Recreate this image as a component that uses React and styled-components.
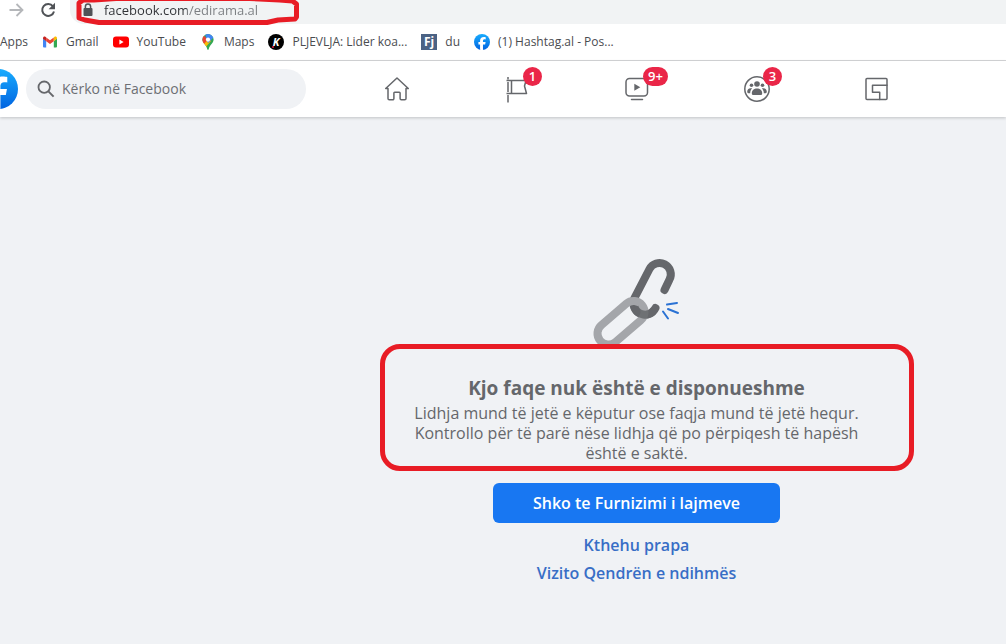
import { useId, useState } from 'react'
import styled, { createGlobalStyle } from 'styled-components'

const GlobalStyle = createGlobalStyle`
  * { box-sizing: border-box; }

  body {
    margin: 0;
    background-color: #f0f2f5;
    color: #65676b;
    font-family: 'Open Sans', 'Noto Sans', sans-serif;
  }

  button, input { font: inherit; }
  a { text-decoration: none; }
  svg { display: block; flex-shrink: 0; }
`

// ─── Browser chrome ───────────────────────────────────────────────────────────

const Page = styled.div`
  display: flex;
  flex-direction: column;
  min-height: 100vh;
  overflow: hidden;
`

const Toolbar = styled.div`
  display: flex;
  align-items: flex-start;
  height: 24px;
  background-color: #fff;
`

const ToolButton = styled.button`
  display: flex;
  align-items: center;
  justify-content: center;
  width: 32px;
  height: 20px;
  padding: 0;
  border: 0;
  background: none;
  color: ${p => (p.disabled ? '#b5b7ba' : '#505357')};
`

const AddressBar = styled.label`
  position: relative;
  flex: 1;
  display: flex;
  align-items: center;
  gap: 11px;
  height: 24px;
  margin-left: 6px;
  padding: 0 0 4px 13px;
  border-bottom-left-radius: 14px;
  background-color: #f1f3f4;
`

// host part is darker than the path
const AddressInput = styled.input`
  flex: 1;
  min-width: 0;
  height: 20px;
  padding: 0;
  border: 0;
  outline: none;
  font-size: 13px;
  line-height: 20px;
  color: transparent;
  background-image: linear-gradient(to right, #303236 83px, #7a7d81 83px);
  background-clip: text;
`

const AddressMark = styled.svg`
  position: absolute;
  top: 0;
  left: 6px;
  pointer-events: none;
`

const Bookmarks = styled.nav`
  display: flex;
  align-items: center;
  gap: 14px;
  height: 37px;
  border-bottom: 1px solid #d5d6d8;
  background-color: #fff;
`

const Bookmark = styled.a`
  display: flex;
  align-items: center;
  gap: 8px;
  color: #4a4c50;
  font-size: 12px;
  line-height: 16px;
  white-space: nowrap;
`

// ─── Site header ──────────────────────────────────────────────────────────────

const Header = styled.header`
  display: flex;
  align-items: center;
  height: 56px;
  background-color: #fff;
  box-shadow: 0 1px 3px rgba(0, 0, 0, 0.2);
`

const HomeLink = styled.a`
  margin-left: -22px;
`

const Search = styled.label`
  display: flex;
  align-items: center;
  gap: 7px;
  width: 280px;
  height: 40px;
  margin-left: 8px;
  padding: 0 11px;
  border-radius: 20px;
  background-color: #f0f2f5;
`

const SearchInput = styled.input`
  flex: 1;
  min-width: 0;
  padding: 0;
  border: 0;
  outline: none;
  background: none;
  font-size: 14px;
  line-height: 20px;
  color: #65676b;

  &::placeholder { color: #6d6f74; opacity: 1; }
`

const Tabs = styled.nav`
  display: flex;
  margin-left: 31px;
`

const Tab = styled.a`
  display: flex;
  align-items: center;
  justify-content: center;
  width: 120px;
  height: 56px;
  color: #65676b;
`

const TabIcon = styled.span`
  position: relative;
`

const Badge = styled.span`
  position: absolute;
  top: -8px;
  left: 20px;
  min-width: 19px;
  height: 19px;
  padding: 0 5px;
  border-radius: 10px;
  background-color: #ea2648;
  color: #fff;
  font-size: 13px;
  font-weight: 600;
  line-height: 19px;
  text-align: center;
`

// ─── Missing page notice ──────────────────────────────────────────────────────

const Main = styled.main`
  display: flex;
  flex-direction: column;
  align-items: center;
  padding: 129px 0 48px 267px;
`

const Notice = styled.section`
  position: relative;
  display: flex;
  flex-direction: column;
  align-items: center;
  margin-top: 18px;
  text-align: center;
`

const NoticeFrame = styled.div`
  position: absolute;
  top: -32px;
  right: -43px;
  bottom: -8px;
  left: -23px;
  border: 5px solid #e81c25;
  border-radius: 20px;
  pointer-events: none;
`

const Title = styled.h1`
  margin: 0 0 3px;
  font-size: 19px;
  font-weight: 700;
  line-height: 24px;
`

const Text = styled.p`
  width: 468px;
  margin: 0;
  font-size: 16px;
  line-height: 20px;
`

const PrimaryButton = styled.button`
  width: 287px;
  height: 40px;
  margin: 20px 0 8px;
  border: 0;
  border-radius: 6px;
  background-color: #1877f2;
  color: #fff;
  font-size: 16px;
  font-weight: 600;
`

const TextLink = styled.a`
  color: #386ec6;
  font-size: 16px;
  font-weight: 600;
  line-height: 28px;
`

// ─── Icons ────────────────────────────────────────────────────────────────────

function FacebookLogo({ size }) {
  const id = useId()
  return (
    <svg width={size} height={size} viewBox="0 0 36 36">
      <defs>
        <linearGradient id={id} x1="0" y1="0" x2="0" y2="1">
          <stop offset="0" stopColor="#18acfe" />
          <stop offset="1" stopColor="#0163e0" />
        </linearGradient>
      </defs>
      <circle cx="18" cy="18" r="18" fill={`url(#${id})`} />
      <path fill="#fff" d="M13.651 35.471v-11.97H9.936V18h3.715v-2.37c0-6.127 2.772-8.964 8.784-8.964 1.138 0 3.103.223 3.91.446v4.983c-.425-.043-1.167-.065-2.081-.065-2.952 0-4.09 1.116-4.09 4.025V18h5.883l-1.008 5.5h-4.867v12.37a18.183 18.183 0 0 1-6.53-.399Z" />
    </svg>
  )
}

const ForwardIcon = () => (
  <svg width="16" height="16" viewBox="0 0 16 16" fill="none" stroke="currentColor" strokeWidth="1.8">
    <path d="M1.5 8h12M8.5 2l6 6-6 6" />
  </svg>
)

const ReloadIcon = () => (
  <svg width="16" height="16" viewBox="0 0 16 16" fill="none" stroke="currentColor" strokeWidth="2">
    <path d="M13 4.3A6 6 0 1 0 14 9.5" />
    <path d="M15 .8v6.4H8.6z" fill="currentColor" stroke="none" />
  </svg>
)

const LockIcon = () => (
  <svg width="10" height="14" viewBox="0 0 10 14">
    <path fill="none" stroke="#505357" strokeWidth="1.5" d="M2.4 6V3.6a2.6 2.6 0 0 1 5.2 0V6" />
    <rect x=".5" y="5" width="9" height="8" rx="1" fill="#505357" />
  </svg>
)

const GmailIcon = () => (
  <svg width="16" height="16" viewBox="0 0 16 16">
    <path fill="#4285f4" d="M1 4.5l3.2 2.4v6.6H2a1 1 0 0 1-1-1z" />
    <path fill="#34a853" d="M11.8 6.9L15 4.5v8a1 1 0 0 1-1 1h-2.2z" />
    <path fill="#ea4335" d="M4.2 3.4L8 6.3l3.8-2.9v3.8L8 10.1 4.2 7.2z" />
    <path fill="#c5221f" d="M1 4.2c0-1.6 1.6-2 2.6-1.3l.6.5v3.8L1 4.8z" />
    <path fill="#fbbc04" d="M15 4.2c0-1.6-1.6-2-2.6-1.3l-.6.5v3.8L15 4.8z" />
  </svg>
)

const YouTubeIcon = () => (
  <svg width="16" height="16" viewBox="0 0 16 16">
    <rect y="2.4" width="16" height="11.2" rx="3" fill="#f00" />
    <path fill="#fff" d="M6.4 5.6l4.2 2.4-4.2 2.4z" />
  </svg>
)

const MapsIcon = () => {
  const id = useId()
  return (
    <svg width="16" height="16" viewBox="0 0 16 16">
      <clipPath id={id}>
        <path d="M8 0a5.6 5.6 0 0 1 5.6 5.6c0 4-3.8 5-4.9 9.6q-.7 1.4-1.4 0C6.2 10.6 2.4 9.6 2.4 5.6A5.6 5.6 0 0 1 8 0z" />
      </clipPath>
      <g clipPath={`url(#${id})`}>
        <path fill="#34a853" d="M0 0h16v16H0z" />
        <path fill="#fbbc04" d="M0 12L8 3l3 4-7 8z" />
        <path fill="#ea4335" d="M2 0L8 5.6 4 10 0 7z" />
        <path fill="#4285f4" d="M5 0h9v3L8 9 6.5 5z" />
      </g>
      <circle cx="8" cy="5.6" r="2.1" fill="#fff" />
    </svg>
  )
}

const IconLetter = styled.text`
  fill: #fff;
  font-family: 'Open Sans', sans-serif;
  font-weight: 700;
  text-anchor: middle;
`

const KIcon = () => (
  <svg width="16" height="16" viewBox="0 0 16 16">
    <circle cx="8" cy="8" r="8" fill="#000" />
    <IconLetter x="8" y="12" fontSize="11" fontStyle="italic">K</IconLetter>
    <circle cx="5" cy="13" r="1" fill="#e41e3f" />
  </svg>
)

const FjIcon = () => (
  <svg width="16" height="16" viewBox="0 0 16 16">
    <rect width="16" height="16" fill="#4b6284" />
    <IconLetter x="8" y="12" fontSize="12">Fj</IconLetter>
  </svg>
)

const SearchIcon = () => (
  <svg width="18" height="18" viewBox="0 0 18 18" fill="none" stroke="#65676b" strokeWidth="1.8">
    <circle cx="7.2" cy="7.2" r="5.7" />
    <path d="M11.4 11.4l5.2 5.2" strokeWidth="2" />
  </svg>
)

const tabSvg = {
  width: 28,
  height: 28,
  viewBox: '0 0 28 28',
  fill: 'none',
  stroke: 'currentColor',
  strokeWidth: 1.5,
  strokeLinejoin: 'round',
  strokeLinecap: 'round',
}

const HomeIcon = () => (
  <svg {...tabSvg}>
    <path d="M5 13.5H2.7L14 3l11.3 10.5H23v10a1.3 1.3 0 0 1-1.3 1.3h-3.4a1.2 1.2 0 0 1-1.2-1.2V18a.8.8 0 0 0-.8-.8h-4.6a.8.8 0 0 0-.8.8v5.6a1.2 1.2 0 0 1-1.2 1.2H6.3A1.3 1.3 0 0 1 5 23.5z" />
  </svg>
)

const FlagIcon = () => (
  <svg {...tabSvg} strokeLinecap="butt">
    <path d="M5 2v2.5M5 7v10M5 20v7.5" />
    <path d="M3.5 5.5H23l-1.5 5.5 2 7.5H3.5M8.5 5.5v13" />
  </svg>
)

const WatchIcon = () => (
  <svg {...tabSvg}>
    <rect x="3" y="3.5" width="21.5" height="17.5" rx="3.5" />
    <path d="M8.5 24.5h11" />
    <path d="M11.3 8.8v7l6-3.5z" fill="currentColor" stroke="none" />
  </svg>
)

const GroupsIcon = () => (
  <svg {...tabSvg}>
    <circle cx="14" cy="14" r="12.2" />
    <g fill="currentColor" stroke="none">
      <circle cx="14" cy="9" r="2.8" />
      <circle cx="8.5" cy="10.2" r="1.8" />
      <circle cx="19.5" cy="10.2" r="1.8" />
      <path d="M8.8 18.5c0-3.5 2.2-5 5.2-5s5.2 1.5 5.2 5c0 1.2-.8 1.5-1.7 1.5h-7c-.9 0-1.7-.3-1.7-1.5z" />
      <path d="M7.7 13.3c-2.3 0-3.5 1.7-3.5 3.4 0 1.2.9 1.5 2 1.5h1c0-2 .7-3.6 2-4.6-.4-.2-.9-.3-1.5-.3zM20.3 13.3c2.3 0 3.5 1.7 3.5 3.4 0 1.2-.9 1.5-2 1.5h-1c0-2-.7-3.6-2-4.6.4-.2.9-.3 1.5-.3z" />
    </g>
  </svg>
)

const GamingIcon = () => (
  <svg {...tabSvg}>
    <rect x="3" y="3.5" width="21" height="21" rx="1" />
    <path d="M24 10.3H9.5v7h7.2v7.2" />
  </svg>
)

const BrokenLink = () => (
  <svg width="112" height="112" viewBox="581 246 112 112" fill="none" strokeWidth="8" strokeLinecap="round">
    <path stroke="#65676b" d="M664.500 290l5-10.500a11 11 0 0 0-20-10.500L634.500 298a11 11 0 0 0 21 10" />
    <path stroke="#a4a6aa" d="M626.500 303.500l-25 21.500a11 11 0 0 0 14 17l25-21.500a11 11 0 0 0-14-17z" />
    <path stroke="#65676b" strokeOpacity=".85" strokeLinecap="butt" d="M634.500 307a11 11 0 0 0 19.500 3" />
    <g stroke="#2a72d4" strokeWidth="2">
      <path d="M667 304.500l10-1.500M668 309l10 4M663 311.500l5 7" />
    </g>
  </svg>
)

// ─── Page ─────────────────────────────────────────────────────────────────────

const BOOKMARKS = [
  { label: 'Apps' },
  { label: 'Gmail', icon: <GmailIcon /> },
  { label: 'YouTube', icon: <YouTubeIcon /> },
  { label: 'Maps', icon: <MapsIcon /> },
  { label: 'PLJEVLJA: Lider koa...', icon: <KIcon /> },
  { label: 'du', icon: <FjIcon /> },
  { label: '(1) Hashtag.al - Pos...', icon: <FacebookLogo size={16} /> },
]

const TABS = [
  { label: 'Home', icon: <HomeIcon /> },
  { label: 'Pages', icon: <FlagIcon />, count: '1' },
  { label: 'Watch', icon: <WatchIcon />, count: '9+' },
  { label: 'Groups', icon: <GroupsIcon />, count: '3' },
  { label: 'Gaming', icon: <GamingIcon /> },
]

export default function App() {
  const [address, setAddress] = useState('facebook.com/edirama.al')

  return (
    <Page>
      <GlobalStyle />

      <Toolbar>
        <ToolButton aria-label="Forward" disabled><ForwardIcon /></ToolButton>
        <ToolButton aria-label="Reload"><ReloadIcon /></ToolButton>
        <AddressBar>
          <LockIcon />
          <AddressInput
            type="text"
            aria-label="Address"
            value={address}
            onChange={e => setAddress(e.target.value)}
          />
          <AddressMark width="224" height="27" viewBox="0 0 224 27" fill="none" stroke="#e81c25" strokeWidth="5" strokeLinejoin="round">
            <path d="M18 0H7L3 3v15l6 2 14 2.500h168l11-2.500 17-1 1.500-2V4l-4-3-13-1-30-1.500H40z" />
          </AddressMark>
        </AddressBar>
      </Toolbar>

      <Bookmarks aria-label="Bookmarks">
        {BOOKMARKS.map(b => (
          <Bookmark key={b.label} href="#">
            {b.icon}
            {b.label}
          </Bookmark>
        ))}
      </Bookmarks>

      <Header>
        <HomeLink href="#" aria-label="Facebook"><FacebookLogo size={40} /></HomeLink>
        <Search>
          <SearchIcon />
          <SearchInput type="search" aria-label="Kërko në Facebook" placeholder="Kërko në Facebook" />
        </Search>
        <Tabs>
          {TABS.map(t => (
            <Tab key={t.label} href="#" aria-label={t.label}>
              <TabIcon>
                {t.icon}
                {t.count && <Badge>{t.count}</Badge>}
              </TabIcon>
            </Tab>
          ))}
        </Tabs>
      </Header>

      <Main>
        <BrokenLink />
        <Notice>
          <Title>Kjo faqe nuk është e disponueshme</Title>
          <Text>
            Lidhja mund të jetë e këputur ose faqja mund të jetë hequr. Kontrollo për të
            parë nëse lidhja që po përpiqesh të hapësh është e saktë.
          </Text>
          <NoticeFrame />
        </Notice>
        <PrimaryButton>Shko te Furnizimi i lajmeve</PrimaryButton>
        <TextLink href="#">Kthehu prapa</TextLink>
        <TextLink href="#">Vizito Qendrën e ndihmës</TextLink>
      </Main>
    </Page>
  )
}
